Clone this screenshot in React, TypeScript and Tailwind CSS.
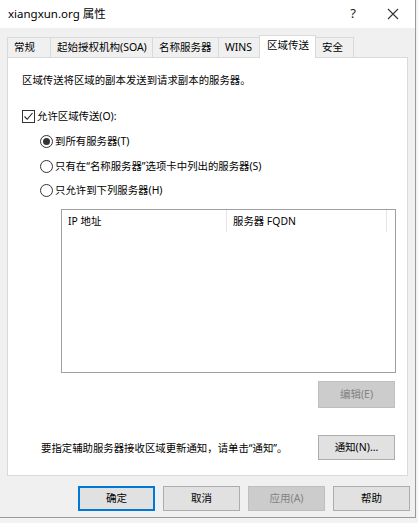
import React from "react";

const font = { fontFamily: '"Noto Sans", "Noto Sans CJK SC", sans-serif' };

function Btn({ label, disabled, def, className = "" }: { label: string; disabled?: boolean; def?: boolean; className?: string }) {
  const base = "flex items-center justify-center text-[10.5px] leading-none";
  const style = disabled
    ? "bg-[#cccccc] border border-[#bfbfbf] text-[#838383]"
    : def
    ? "bg-[#e1e1e1] border-2 border-[#0078d7] text-black"
    : "bg-[#e1e1e1] border border-[#adadad] text-black";
  return <div className={`${base} ${style} ${className}`}>{label}</div>;
}

function Radio({ checked }: { checked?: boolean }) {
  return (
    <div className="w-[13px] h-[13px] rounded-full border border-[#333] bg-white flex items-center justify-center shrink-0">
      {checked && <div className="w-[7px] h-[7px] rounded-full bg-[#333]" />}
    </div>
  );
}

export default function App() {
  const tabs = [
    { t: "常规", w: 44 },
    { t: "起始授权机构(SOA)", w: 103 },
    { t: "名称服务器", w: 67 },
    { t: "WINS", w: 42 },
    { t: "区域传送", w: 57, sel: true },
    { t: "安全", w: 39 },
  ];
  return (
    <div className="w-[418px] h-[523px] bg-[#f3f3f3] flex overflow-hidden" style={font}>
      <div className="w-[416px] h-[518px] bg-[#f0f0f0] border-r border-b border-[#9a9a9a] flex flex-col shrink-0">
        {/* title bar */}
        <div className="h-[28px] bg-white flex items-center pl-[8px] shrink-0">
          <div className="text-[11.5px] text-black flex-1">xiangxun.org 属性</div>
          <div className="w-[28px] text-center text-[13px] text-[#222] mr-[16px]">?</div>
          <div className="w-[20px] mr-[12px] flex items-center justify-center">
            <svg width="12" height="12" viewBox="0 0 12 12">
              <path d="M1 1 L11 11 M11 1 L1 11" stroke="#333" strokeWidth="1.1" />
            </svg>
          </div>
        </div>
        {/* tabs */}
        <div className="h-[29px] flex items-end pl-[7px] shrink-0 relative z-10">
          {tabs.map((tb, i) =>
            tb.sel ? (
              <div
                key={i}
                className="h-[23px] bg-white border border-b-0 border-[#d9d9d9] -ml-px flex items-center pl-[7px] text-[10.5px] text-black mb-[-1px]"
                style={{ width: tb.w }}
              >
                <span className="-mt-[3px]">{tb.t}</span>
              </div>
            ) : (
              <div
                key={i}
                className={`h-[20px] bg-[#f0f0f0] border border-b-0 border-[#d9d9d9] flex items-center pl-[6px] text-[10.5px] text-black ${i > 0 ? "-ml-px" : ""}`}
                style={{ width: tb.w }}
              >
                {tb.t}
              </div>
            )
          )}
        </div>
        {/* panel */}
        <div className="ml-[7px] w-[401px] h-[419px] bg-white border border-[#d9d9d9] flex flex-col text-[10.4px] text-black leading-[14px] shrink-0">
          <div className="mt-[15px] ml-[14px]">区域传送将区域的副本发送到请求副本的服务器。</div>
          <div className="mt-[22px] ml-[14px] flex items-center gap-[2px]">
            <div className="w-[13px] h-[13px] border border-[#333] bg-white flex items-center justify-center">
              <svg width="11" height="11" viewBox="0 0 11 11">
                <path d="M1.5 5.5 L4.2 8.3 L9.5 2" stroke="#222" strokeWidth="1.1" fill="none" />
              </svg>
            </div>
            <span>允许区域传送(O):</span>
          </div>
          <div className="mt-[11px] ml-[32px] flex items-center gap-[2px]">
            <Radio checked />
            <span>到所有服务器(T)</span>
          </div>
          <div className="mt-[11px] ml-[32px] flex items-center gap-[2px]">
            <Radio />
            <span>只有在“名称服务器”选项卡中列出的服务器(S)</span>
          </div>
          <div className="mt-[10px] ml-[32px] flex items-center gap-[2px]">
            <Radio />
            <span>只允许到下列服务器(H)</span>
          </div>
          {/* list */}
          <div className="mt-[12px] ml-[53px] w-[335px] h-[164px] border border-[#a0a0a0] bg-white flex flex-col shrink-0">
            <div className="h-[22px] flex">
              <div className="w-[165px] border-r border-[#e5e5e5] pl-[6px] pt-[4px]">IP 地址</div>
              <div className="w-[160px] border-r border-[#e5e5e5] pl-[6px] pt-[4px]">服务器 FQDN</div>
            </div>
          </div>
          <div className="mt-[8px] ml-[310px]">
            <Btn label="编辑(E)" disabled className="w-[77px] h-[27px]" />
          </div>
          <div className="mt-[27px] ml-[33px] flex items-center">
            <span className="w-[277px]">要指定辅助服务器接收区域更新通知，请单击“通知”。</span>
            <Btn label="通知(N)..." className="w-[77px] h-[25px]" />
          </div>
        </div>
        {/* bottom buttons */}
        <div className="mt-[10px] ml-[78px] flex gap-[8px] shrink-0">
          <Btn label="确定" def className="w-[77px] h-[25px]" />
          <Btn label="取消" className="w-[77px] h-[25px]" />
          <Btn label="应用(A)" disabled className="w-[77px] h-[25px]" />
          <Btn label="帮助" className="w-[77px] h-[25px]" />
        </div>
      </div>
    </div>
  );
}
